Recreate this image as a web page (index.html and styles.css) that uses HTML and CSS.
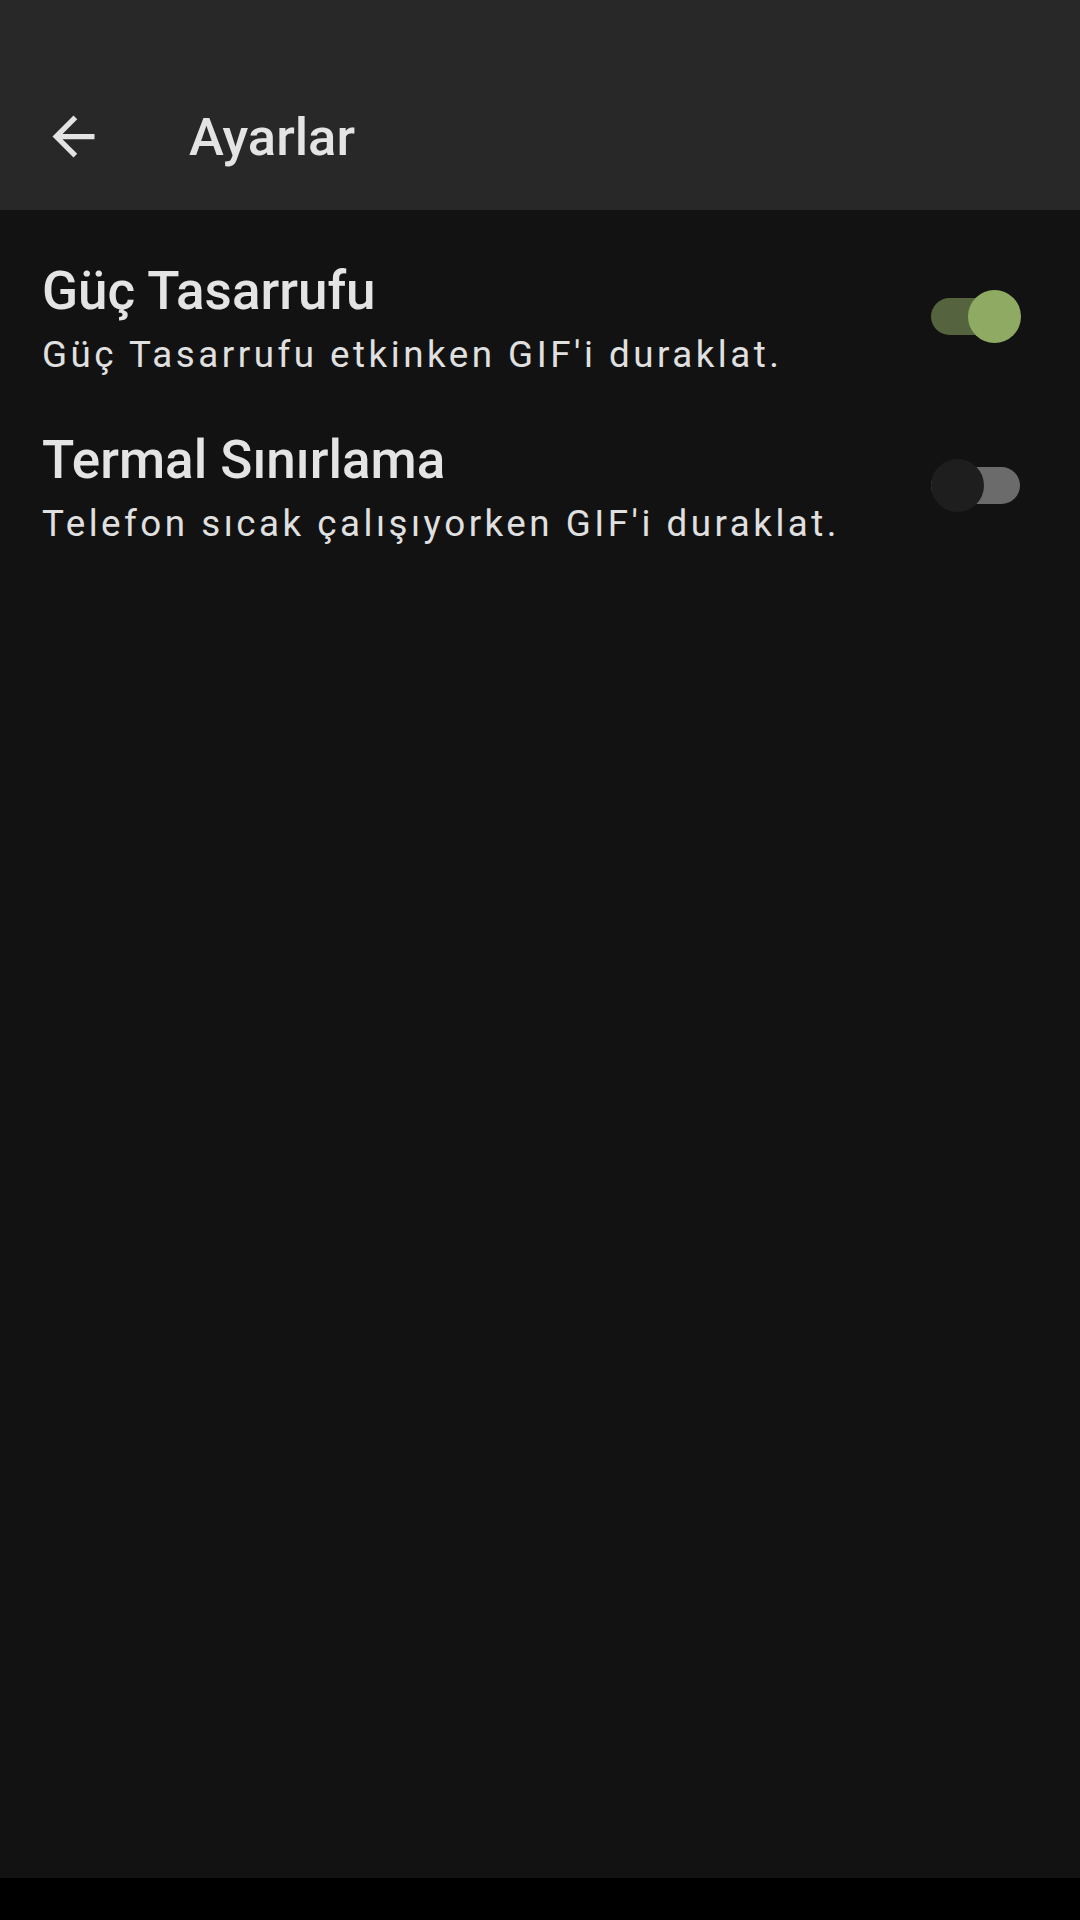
FILE: index.html
```html
<!DOCTYPE html>
<html lang="tr">
<head>
<meta charset="utf-8">
<title>Ayarlar</title>
<link rel="stylesheet" href="styles.css">
</head>
<body>
<div class="screen">
  <header class="appbar">
    <div class="toolbar">
      <button class="nav-btn" aria-label="Geri">
        <svg viewBox="0 0 24 24" width="63" height="63"><path fill="#e3e3e3" d="M20 11H7.83l5.59-5.59L12 4l-8 8 8 8 1.41-1.41L7.83 13H20v-2z"/></svg>
      </button>
      <h1 class="title">Ayarlar</h1>
    </div>
  </header>
  <main class="content">
    <div class="pref">
      <div class="pref-text">
        <div class="pref-title">Güç Tasarrufu</div>
        <div class="pref-summary">Güç Tasarrufu etkinken GIF'i duraklat.</div>
      </div>
      <div class="switch on"><span class="track"></span><span class="thumb"></span></div>
    </div>
    <div class="pref">
      <div class="pref-text">
        <div class="pref-title">Termal Sınırlama</div>
        <div class="pref-summary">Telefon sıcak çalışıyorken GIF'i duraklat.</div>
      </div>
      <div class="switch"><span class="track"></span><span class="thumb"></span></div>
    </div>
  </main>
  <div class="navbar"></div>
</div>
</body>
</html>
```
FILE: styles.css
```css
* { box-sizing: border-box; }
html, body { margin: 0; padding: 0; background: #121212; }
body { font-family: Roboto, "Noto Sans", sans-serif; color: #e4e4e4; }
.screen { width: 1080px; height: 1920px; display: flex; flex-direction: column; }
.appbar { height: 210px; background: #282828; padding-top: 63px; flex: none; }
.toolbar { height: 147px; display: flex; align-items: center; padding-left: 42px; }
.nav-btn { width: 63px; height: 63px; padding: 0; margin: 0; border: 0; background: none; display: flex; }
.title { margin: 0 0 0 84px; font-size: 52.5px; font-weight: 500; color: #e4e4e4; line-height: 62px; }
.content { flex: 1; background: #121212; padding-top: 26px; }
.pref { display: flex; align-items: center; padding: 24px 59px 24px 42px; }
.pref-text { flex: 1; display: flex; flex-direction: column; }
.pref-title { font-size: 53px; font-weight: 500; line-height: 62px; color: #e4e4e4; }
.pref-summary { font-size: 36.75px; line-height: 52px; margin-top: 7px; color: #e0e0e0; letter-spacing: 3.5px; }
.switch { position: relative; width: 90px; height: 53px; margin-bottom: 8px; flex: none; }
.track { position: absolute; left: 0; top: 8px; width: 89px; height: 37px; border-radius: 18.5px; background: #6b6b6b; }
.thumb { position: absolute; left: 0; top: 0; width: 53px; height: 53px; border-radius: 50%; background: #1e1e1e; }
.switch.on .track { background: #55643f; }
.switch.on .thumb { left: 37px; background: #8fab63; }
.navbar { height: 42px; background: #000; flex: none; }
```
